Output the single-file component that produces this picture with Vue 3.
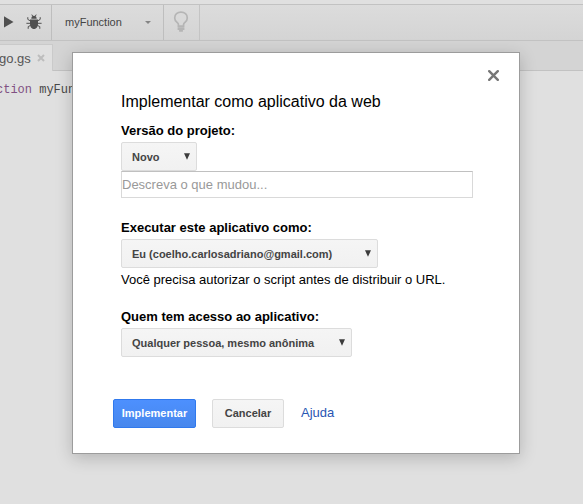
<script setup>
const fields = [
  { id: 'version', label: 'Versão do projeto:', value: 'Novo', input: 'Descreva o que mudou...' },
  { id: 'run-as', label: 'Executar este aplicativo como:', value: 'Eu (coelho.carlosadriano@gmail.com)', note: 'Você precisa autorizar o script antes de distribuir o URL.' },
  { id: 'access', label: 'Quem tem acesso ao aplicativo:', value: 'Qualquer pessoa, mesmo anônima' },
]
</script>

<template>
  <div class="page">
    <header class="toolbar">
      <div class="tools">
        <svg class="play" width="10" height="12" viewBox="0 0 10 12"><path d="M0 0.3L9.5 6L0 11.5Z" fill="#505050" /></svg>
        <svg class="bug" width="16" height="16" viewBox="0 0 16 16">
          <g fill="none" stroke="#505050" stroke-width="1">
            <path d="M5.8 0.6L6.8 2.4M10.2 0.6L9.2 2.4M4.5 7L1.8 5.4V3.2M11.5 7L14.2 5.4V3.2M4.5 9.3H0.4M11.5 9.3H15.6M4.8 11.3L2.2 12.6V14.8M11.2 11.3L13.8 12.6V14.8" />
          </g>
          <path d="M5.3 4.8C5.3 2.7 6.3 1.8 8 1.8S10.7 2.7 10.7 4.8ZM4 5.4H12V9.5C12 12.7 10.6 15 8 15S4 12.7 4 9.5Z" fill="#505050" />
        </svg>
      </div>
      <div class="function-select">
        <span>myFunction</span>
        <svg width="6" height="3" viewBox="0 0 6 3"><path d="M0 0H6L3 3Z" fill="#858585" /></svg>
      </div>
      <div class="hint">
        <svg width="16" height="22" viewBox="0 0 16 22">
          <path d="M5.4 15.2V13.4C5.2 11.6 1.7 10.7 1.7 6.9C1.7 3.5 4.4 1.1 8 1.1S14.3 3.5 14.3 6.9C14.3 10.7 10.8 11.6 10.6 13.4V15.2Z" fill="none" stroke="#b5b5b5" stroke-width="1.7" />
          <path d="M4.6 16.3H11.4V19H9.9V20.8H6.1V19H4.6Z" fill="#b5b5b5" />
        </svg>
      </div>
    </header>
    <nav class="tabs">
      <div class="tab">
        <span>go.gs</span>
        <svg width="8" height="8" viewBox="0 0 8 8"><path d="M1 1L7 7M7 1L1 7" stroke="#bdbdbd" stroke-width="2" /></svg>
      </div>
    </nav>
    <main class="editor"><span class="keyword">ction</span> myFunction</main>

    <section class="dialog" role="dialog">
      <svg class="close" width="11" height="11" viewBox="0 0 11 11"><path d="M1.2 1.2L9.8 9.8M9.8 1.2L1.2 9.8" stroke="#777" stroke-width="2.4" stroke-linecap="round" /></svg>
      <h1>Implementar como aplicativo da web</h1>
      <div v-for="field in fields" :key="field.id" class="field" :class="field.id">
        <div class="label"><span>{{ field.label }}</span></div>
        <div class="select">
          <span>{{ field.value }}</span>
          <svg width="6" height="7" viewBox="0 0 6 7"><path d="M0 0.2H6L3 6.8Z" fill="#3c3c3c" /></svg>
        </div>
        <input v-if="field.input" type="text" :placeholder="field.input" />
        <p v-if="field.note"><span>{{ field.note }}</span></p>
      </div>
      <footer>
        <button class="primary">Implementar</button>
        <button class="secondary">Cancelar</button>
        <a>Ajuda</a>
      </footer>
    </section>
  </div>
</template>

<style>
body { margin: 0; overflow: hidden; }
</style>

<style scoped>
* { box-sizing: border-box; }
.page {
  position: relative;
  width: 583px;
  height: 504px;
  overflow: hidden;
  background: #e0e0e0;
  font-family: "Liberation Sans", Arial, sans-serif;
  padding-top: 4px;
}
.toolbar {
  display: flex;
  height: 37px;
  border-top: 1px solid #c2c2c2;
  border-bottom: 1px solid #c2c2c2;
  background: linear-gradient(#dcdcdc, #d4d4d4);
}
.tools {
  display: flex;
  width: 52px;
  padding-left: 4px;
  border-right: 1px solid #bebebe;
}
.play { margin-top: 11px; }
.bug { margin: 9px 0 0 12px; }
.function-select {
  display: flex;
  align-items: center;
  justify-content: space-between;
  width: 112px;
  padding: 0 12px 0 13px;
  border-right: 1px solid #bebebe;
  color: #444;
  font-size: 11px;
}
.function-select span { margin-bottom: 1px; }
.hint {
  width: 36px;
  padding: 6px 0 0 9px;
  border-right: 1px solid #c4c4c4;
}
.hint svg { display: block; }
.tabs {
  height: 30px;
  padding-top: 3px;
  border-bottom: 1px solid #c2c2c2;
  background: #d4d4d4;
}
.tab {
  display: flex;
  align-items: center;
  gap: 6px;
  width: 53px;
  height: 27px;
  border-top: 1px solid #cacaca;
  border-right: 1px solid #cacaca;
  background: #e0e0e0;
  color: #555;
  font-size: 13px;
}
.tab span { margin-left: -1px; }
.editor {
  padding-top: 12px;
  color: #484848;
  font: 12px/14px "Liberation Mono", monospace;
  margin-left: -4px;
  white-space: nowrap;
}
.keyword { color: #805083; }

.dialog {
  position: absolute;
  left: 72px;
  top: 52px;
  width: 448px;
  height: 402px;
  padding: 40px 46px 0 48px;
  border: 1px solid #9c9c9c;
  background: #fff;
  box-shadow: 0 4px 16px rgba(0, 0, 0, 0.2);
  color: #000;
}
.close { position: absolute; right: 20px; top: 17px; }
h1 {
  height: 18px;
  margin: 0;
  font-size: 16px;
  font-weight: 400;
  line-height: 18px;
  white-space: nowrap;
}
.field { display: flex; flex-direction: column; align-items: flex-start; }
.field.version { height: 97px; padding-top: 11px; }
.field.run-as { height: 89px; padding-top: 11px; }
.field.access { height: 102px; padding-top: 11px; }
.label {
  height: 20px;
  font-size: 13px;
  font-weight: 700;
  line-height: 18px;
  white-space: nowrap;
}
.select {
  display: flex;
  flex: none;
  align-items: center;
  justify-content: space-between;
  height: 29px;
  padding: 0 6px 0 10px;
  border: 1px solid #dcdcdc;
  border-radius: 2px;
  background: linear-gradient(#f5f5f5, #f1f1f1);
  color: #444;
  font-size: 11px;
  font-weight: 700;
  line-height: 27px;
  white-space: nowrap;
}
.select span { padding-top: 1px; line-height: 28px; }
.select svg { margin-bottom: 1px; }
.version .select { width: 76px; }
.run-as .select { width: 257px; }
.access .select { width: 231px; }
input {
  flex: none;
  width: 352px;
  height: 27px;
  padding: 0 0 1px;
  border: 1px solid #d9d9d9;
  border-top-color: #c0c0c0;
  outline: 0;
  background: #fff;
  font: 13px "Liberation Sans", Arial, sans-serif;
}
input::placeholder { color: #999; }
p {
  height: 24px;
  margin: 0;
  font-size: 13px;
  line-height: 24px;
  white-space: nowrap;
}
footer { display: flex; margin-left: -8px; }
button {
  height: 29px;
  padding: 0 0 1px;
  border-radius: 2px;
  font: 700 11px "Liberation Sans", Arial, sans-serif;
}
.primary {
  width: 83px;
  border: 1px solid #3079ed;
  background: linear-gradient(#4d90fe, #4787ed);
  color: #fff;
}
.secondary {
  width: 72px;
  margin-left: 16px;
  border: 1px solid #dcdcdc;
  background: linear-gradient(#f5f5f5, #f1f1f1);
  color: #444;
}
a {
  margin-left: 17px;
  color: #2955b3;
  font-size: 13px;
  line-height: 27px;
}
</style>
